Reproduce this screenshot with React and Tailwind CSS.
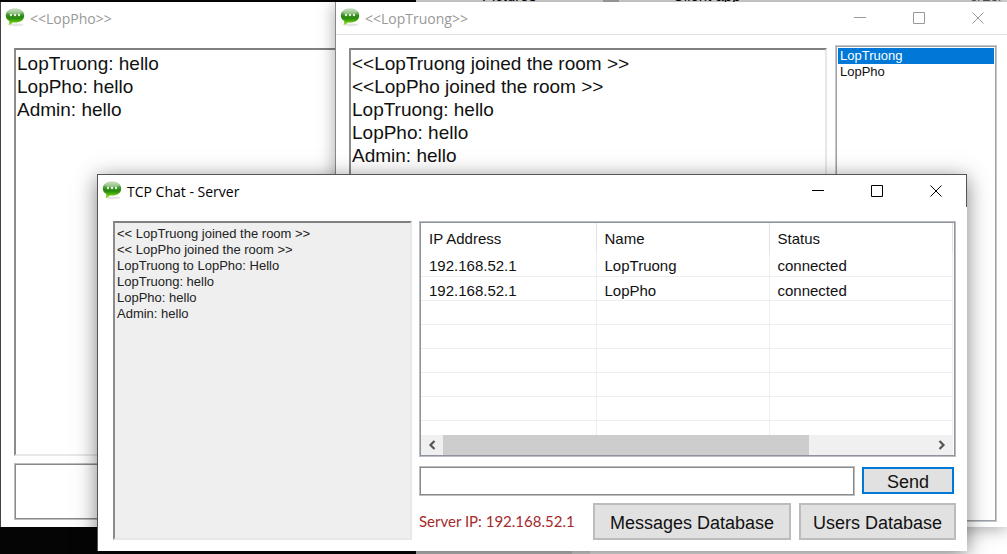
import { useId } from "react";

function ChatIcon() {
  const id = useId();
  return (
    <svg className="h-5 w-5 shrink-0" viewBox="0 0 20 20" aria-hidden="true">
      <defs>
        <linearGradient id={id} x1="0" y1="0" x2="0" y2="1">
          <stop offset="0" stopColor="#b9d6b0" />
          <stop offset="0.25" stopColor="#78b568" />
          <stop offset="0.45" stopColor="#2f8a1c" />
          <stop offset="0.6" stopColor="#2a8c0a" />
          <stop offset="0.8" stopColor="#5cbc10" />
          <stop offset="1" stopColor="#a8e03a" />
        </linearGradient>
      </defs>
      <ellipse cx="11" cy="16.8" rx="7.5" ry="1.4" fill="#000" opacity="0.1" />
      <path
        d="M10 0.500C15.300 0.500 19.200 3.200 19.200 7.500S15.300 14.600 10 14.600C9.200 14.600 8.400 14.500 7.600 14.400C6.500 16 5.200 16.700 3.400 16.900C4.200 15.800 4.400 14.600 4.200 13C2.100 11.800 0.800 9.900 0.800 7.500C0.800 3.200 4.700 0.500 10 0.500Z"
        fill={`url(#${id})`}
      />
      <ellipse cx="10" cy="3.800" rx="7.200" ry="2.800" fill="#fff" opacity="0.25" />
      <circle cx="6" cy="7" r="1.200" fill="#e4f3dc" />
      <circle cx="10" cy="7" r="1.200" fill="#e4f3dc" />
      <circle cx="14" cy="7" r="1.200" fill="#e4f3dc" />
    </svg>
  );
}

const GLYPHS = {
  Minimize: "M0 5.500H12",
  Maximize: "M0.500 0.500H11.500V11.500H0.500Z",
  Close: "M0.500 0.500L11.500 11.500M11.500 0.500L0.500 11.500",
};

function WindowButtons() {
  return (
    <div className="ml-auto flex h-full">
      {Object.entries(GLYPHS).map(([name, d]) => (
        <button key={name} type="button" aria-label={name} className="flex w-[59px] items-center justify-center">
          <svg className="h-3 w-3" viewBox="0 0 12 12" fill="none" stroke="currentColor" aria-hidden="true">
            <path d={d} />
          </svg>
        </button>
      ))}
    </div>
  );
}

function TitleBar({ title, active, divided, controls }) {
  return (
    <header
      className={`flex shrink-0 items-center gap-[5px] bg-white pl-1 font-['Open_Sans',sans-serif] text-[14px] ${
        active ? "border-r border-[#555] pr-px text-black" : "text-[#999999]"
      } ${divided ? "h-[33px] border-b border-b-[#e2e2e2]" : "h-8"}`}
    >
      <ChatIcon />
      <h2 className="whitespace-nowrap">{title}</h2>
      {controls && <WindowButtons />}
    </header>
  );
}

function Log({ lines, className }) {
  return (
    <div
      role="log"
      className={`border-2 border-t-[#808080] border-r-[#e8e8e8] border-b-[#e8e8e8] border-l-[#8c8c8c] ${className}`}
    >
      {lines.map((line) => (
        <p key={line} className="whitespace-nowrap">
          {line}
        </p>
      ))}
    </div>
  );
}

function FirstClient() {
  return (
    <section className="absolute top-[2px] bottom-[27px] left-0 flex w-[670px] flex-col border-l border-[#444] bg-white">
      <TitleBar title="<<LopPho>>" />
      <div className="flex flex-1 flex-col gap-[7px] px-[13px] pt-[14px] pb-[7px]">
        <Log
          className="flex-1 pt-[2px] pl-px text-[19px] leading-[23px]"
          lines={["LopTruong: hello", "LopPho: hello", "Admin: hello"]}
        />
        <input
          aria-label="Message"
          className="h-[57px] w-full border border-[#bdbdbd] bg-white px-1 text-lg inset-ring inset-ring-[#8a8a8a] outline-none"
        />
      </div>
    </section>
  );
}

function SecondClient() {
  return (
    <section className="absolute top-[2px] right-0 bottom-[27px] left-[335px] flex flex-col border-l border-[#888] bg-white shadow-[0_2px_16px_rgba(0,0,0,0.35)]">
      <TitleBar title="<<LopTruong>>" divided controls />
      <div className="flex flex-1 gap-2 pt-[10px] pr-[10px] pb-[5px] pl-[13px]">
        <Log
          className="mt-[3px] flex-1 pt-[2px] pl-px text-[19px] leading-[23px]"
          lines={[
            "<<LopTruong joined the room >>",
            "<<LopPho joined the room >>",
            "LopTruong: hello",
            "LopPho: hello",
            "Admin: hello",
          ]}
        />
        <ul
          className="w-[162px] border border-[#c4c8cc] px-[2px] pt-[2px] text-[13px] leading-4 inset-ring inset-ring-[#9da1a8]"
          aria-label="Users"
        >
          <li className="bg-[#0078d7] pl-[2px] text-white">LopTruong</li>
          <li className="pl-[2px]">LopPho</li>
        </ul>
      </div>
    </section>
  );
}

const CONNECTIONS = [
  ["192.168.52.1", "LopTruong", "connected"],
  ["192.168.52.1", "LopPho", "connected"],
  ["", "", ""],
  ["", "", ""],
  ["", "", ""],
  ["", "", ""],
  ["", "", ""],
  ["", "", ""],
];

function Arrow({ label, d }) {
  return (
    <button type="button" aria-label={label} className="flex w-[22px] items-center justify-center text-[#555]">
      <svg className="h-[10px] w-2" viewBox="0 0 8 10" fill="none" stroke="currentColor" strokeWidth="2.200" aria-hidden="true">
        <path d={d} />
      </svg>
    </button>
  );
}

function ConnectionList() {
  return (
    <div className="flex min-h-0 flex-1 flex-col border border-[#b9bdc3] bg-white py-px pr-[2px] pl-px inset-ring inset-ring-[#8f939c]">
      <div className="min-h-0 flex-1 overflow-hidden">
        <table className="w-full table-fixed border-collapse text-left text-[15px]">
          <colgroup>
            <col className="w-[175px]" />
            <col className="w-[173px]" />
            <col />
          </colgroup>
          <thead>
            <tr className="h-[29px]">
              {["IP Address", "Name", "Status"].map((h) => (
                <th key={h} className="border-r border-[#e2e2e2] p-0 pt-1 pl-2 font-normal">
                  {h}
                </th>
              ))}
            </tr>
          </thead>
          <tbody>
            {CONNECTIONS.map((row, i) => (
              <tr key={i} className="h-6 border-b border-[#eeeeee]">
                {row.map((cell, j) => (
                  <td key={j} className="border-r border-[#eeeeee] p-0 pt-1 pl-2 leading-[19px]">
                    {cell}
                  </td>
                ))}
              </tr>
            ))}
          </tbody>
        </table>
      </div>
      <div className="flex h-5 shrink-0 bg-[#f0f0f0]">
        <Arrow label="Scroll left" d="M6.500 1L2.500 5L6.500 9" />
        <div className="flex-1">
          <div className="h-full w-3/4 bg-[#cdcdcd]" />
        </div>
        <Arrow label="Scroll right" d="M1.500 1L5.500 5L1.500 9" />
      </div>
    </div>
  );
}

function ServerWindow() {
  return (
    <section className="absolute top-[174px] right-[40px] bottom-[3px] left-[97px] flex flex-col border-t border-l border-[#555] bg-white shadow-[0_4px_20px_rgba(0,0,0,0.5)]">
      <TitleBar title="TCP Chat - Server" active controls />
      <div className="flex min-h-0 flex-1 gap-[7px] pt-[14px] pr-[11px] pb-[11px] pl-[15px]">
        <Log
          className="w-[299px] bg-[#efefef] pt-[3px] pl-[2px] text-[13px] leading-4 text-[#222]"
          lines={[
            "<< LopTruong joined the room >>",
            "<< LopPho joined the room >>",
            "LopTruong to LopPho: Hello",
            "LopTruong: hello",
            "LopPho: hello",
            "Admin: hello",
          ]}
        />
        <div className="flex min-h-0 flex-1 flex-col">
          <ConnectionList />
          <form className="mt-[9px] flex h-[30px] gap-[7px] pr-[2px]" onSubmit={(e) => e.preventDefault()}>
            <input
              aria-label="Server message"
              className="min-w-0 flex-1 border border-[#bdbdbd] px-1 text-base inset-ring inset-ring-[#8a8a8a] outline-none"
            />
            <button type="submit" className="mt-px h-[27px] w-[92px] border-2 border-[#0078d7] bg-[#e1e1e1] pt-[3px] text-lg leading-5">
              Send
            </button>
          </form>
          <div className="mt-[7px] flex h-[37px] items-center gap-2">
            <p className="mr-auto font-['Lato',sans-serif] text-[15px] whitespace-nowrap text-[#a52a2a]">Server IP: 192.168.52.1</p>
            <button type="button" className="h-full w-[198px] border-2 border-[#bcbcbc] bg-[#e1e1e1] pt-0.5 text-lg">
              Messages Database
            </button>
            <button type="button" className="h-full w-[157px] border-2 border-[#bcbcbc] bg-[#e1e1e1] pt-0.5 text-lg">
              Users Database
            </button>
          </div>
        </div>
      </div>
    </section>
  );
}

function FileExplorer() {
  return (
    <div className="absolute top-0 right-0 bottom-0 left-[416px] flex flex-col bg-white">
      <div className="flex h-[2px] shrink-0 items-end overflow-hidden bg-[#dcdcdc] text-[15px] leading-[13px] text-black">
        <span className="w-[187px] shrink-0 pl-[66px]">Pictures</span>
        <span className="h-full w-4 shrink-0 bg-[#a8a8a8]" />
        <span className="flex-1 pl-[54px]">Client app</span>
        <span className="pr-1 text-[#555]">0/29/</span>
      </div>
      <div className="flex flex-1">
        <div className="w-[156px] bg-[#d2d2d2]" />
        <div className="w-[18px] bg-[#eaeaea]" />
      </div>
    </div>
  );
}

export default function App() {
  return (
    <main className="relative h-screen overflow-hidden bg-[#050505] font-['Liberation_Sans',Arial,sans-serif] text-[#111]">
      <FileExplorer />
      <FirstClient />
      <SecondClient />
      <ServerWindow />
    </main>
  );
}
